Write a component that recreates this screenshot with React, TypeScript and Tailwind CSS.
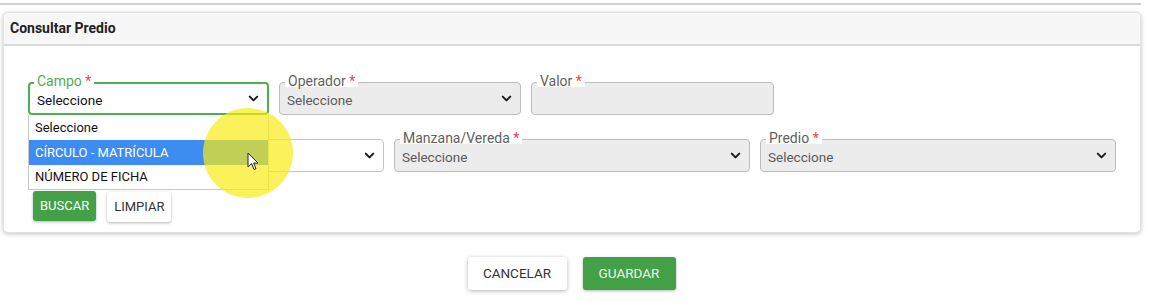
import { ChevronDown } from "lucide-react";

type FieldProps = {
  label: string;
  width: string;
  active?: boolean;
  disabled?: boolean;
  select?: boolean;
  value?: string;
  hideLabel?: boolean;
};

function Field({ label, width, active, disabled, select = true, value = "Seleccione", hideLabel }: FieldProps) {
  return (
    <div className={`relative h-[33px] ${width}`}>
      <div
        className={`h-full rounded-[4px] flex items-center pl-[7px] pr-[6px] pt-[4px] ${
          active
            ? "border-[2px] border-[#4caf50] bg-white"
            : disabled
            ? "border border-[#bdbdbd] bg-[#ececec]"
            : "border border-[#c4c4c4] bg-white"
        }`}
      >
        {select && (
          <span className={`flex-1 text-[13.5px] leading-none ${disabled ? "text-[#5a5a5a]" : "text-[#111]"}`}>
            {value}
          </span>
        )}
        {select && <ChevronDown size={15} strokeWidth={3.2} className="text-[#1a1a1a] -mt-[4px]" />}
      </div>
      {!hideLabel && (
        <span
          className={`absolute left-[6px] -top-[9px] bg-white px-[3px] h-[14px] text-[14px] leading-[16px] ${
            active ? "text-[#4caf50]" : "text-[#5f5f5f]"
          }`}
        >
          {label} <span className="text-[#f44336]">*</span>
        </span>
      )}
    </div>
  );
}

function App() {
  return (
    <div className="relative w-[1151px] h-[303px] bg-white font-['Roboto',sans-serif] overflow-hidden">
      <div className="h-[2px] mt-[3px] mr-[10px] bg-[#d0d0d0]" />

      <div className="mx-[3px] mt-[7px] w-[1138px] rounded-[5px] border border-[#e2e2e2] shadow-[0_1px_4px_rgba(0,0,0,0.25)] bg-white">
        <div className="h-[33px] bg-[#f7f7f7] border-b-[2px] border-[#dadada] rounded-t-[5px] flex items-center px-[6px]">
          <span className="text-[14px] font-bold text-[#222]">Consultar Predio</span>
        </div>

        <div className="pt-[36px] pl-[24px] pb-[10px]">
          <div className="flex gap-[10px]">
            <div className="relative">
              <Field label="Campo" width="w-[241px]" active />
              <div className="absolute left-0 top-[33px] w-[241px] z-10 bg-white border border-[#c8c8c8] border-t-0 text-[13px]">
                <div className="h-[25px] flex items-center px-[6px] text-[#111]">Seleccione</div>
                <div className="h-[25px] flex items-center px-[6px] bg-[#3c8cf2] text-white">CÍRCULO - MATRÍCULA</div>
                <div className="h-[24px] flex items-center px-[6px] text-[#111]">NÚMERO DE FICHA</div>
              </div>
            </div>
            <Field label="Operador" width="w-[242px]" disabled />
            <Field label="Valor" width="w-[243px]" disabled select={false} />
          </div>

          <div className="flex gap-[10px] mt-[24px]">
            <Field label="Zona" width="w-[356px]" value="" hideLabel />
            <Field label="Manzana/Vereda" width="w-[356px]" disabled />
            <Field label="Predio" width="w-[356px]" disabled />
          </div>

          <div className="flex gap-[11px] mt-[19px] pl-[5px]">
            <button className="h-[30px] px-[7px] rounded-[3px] bg-[#43a047] text-white text-[13px] shadow-[0_1px_3px_rgba(0,0,0,0.3)]">
              BUSCAR
            </button>
            <button className="h-[30px] px-[7px] mt-[1px] rounded-[3px] bg-white text-[#333] text-[13px] shadow-[0_1px_3px_rgba(0,0,0,0.3)]">
              LIMPIAR
            </button>
          </div>
        </div>
      </div>

      <div className="flex justify-center gap-[16px] mt-[24px] pr-[8px]">
        <button className="w-[99px] h-[33px] rounded-[3px] bg-white text-[#333] text-[13.5px] shadow-[0_1px_4px_rgba(0,0,0,0.3)]">
          CANCELAR
        </button>
        <button className="w-[93px] h-[33px] rounded-[3px] bg-[#43a047] text-[#eef7ee] text-[13.5px] shadow-[0_1px_3px_rgba(0,0,0,0.3)]">
          GUARDAR
        </button>
      </div>

      {/* cursor highlight */}
      <div className="absolute left-[203px] top-[108px] w-[90px] h-[90px] rounded-full bg-[rgba(250,235,20,0.7)] z-20 pointer-events-none" />
      <svg className="absolute left-[247px] top-[152px] z-30" width="12" height="19" viewBox="0 0 12 19">
        <path d="M1 1 L1 15 L4.5 11.5 L7 17.5 L9 16.6 L6.6 11 L11 11 Z" fill="white" stroke="#222" strokeWidth="1" strokeLinejoin="round" />
      </svg>
    </div>
  );
}

export default App;
